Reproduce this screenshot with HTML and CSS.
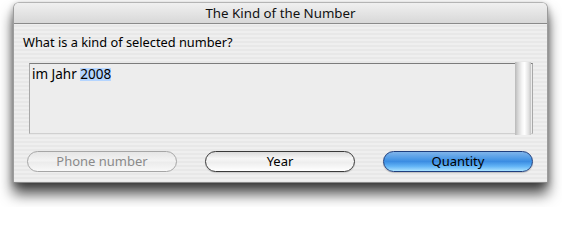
FILE: index.html
```html
<!DOCTYPE html>
<html>
<head>
<meta charset="utf-8">
<title>The Kind of the Number</title>
<link rel="stylesheet" href="styles.css">
</head>
<body>
<div class="window">
  <div class="titlebar">The Kind of the Number</div>
  <div class="content">
    <div class="prompt">What is a kind of selected number?</div>
    <div class="textbox">
      <div class="text">im Jahr <span class="sel">2008</span></div>
      <div class="scrollbar"></div>
    </div>
    <div class="buttons">
      <div class="btn disabled">Phone number</div>
      <div class="btn normal">Year</div>
      <div class="btn default">Quantity</div>
    </div>
  </div>
</div>
</body>
</html>
```
FILE: styles.css
```css
html, body {
  margin: 0;
  padding: 0;
  background: #ffffff;
}
body {
  font-family: "Noto Sans", "DejaVu Sans", sans-serif;
  color: #000;
  min-height: 207px;
  padding-top: 2px;
  box-sizing: border-box;
}
.window {
  margin: 0 0 0 13px;
  width: 533px;
  border: 1px solid #9c9c9c;
  border-top-color: #b4b4b4;
  border-bottom-color: #8a8a8a;
  border-radius: 6px 6px 0 0;
  background: repeating-linear-gradient(to bottom, #efefef 0px, #efefef 2px, #e8e8e8 2px, #e8e8e8 4px);
  box-shadow: 0 11px 14px rgba(0,0,0,0.7), 0 2px 6px rgba(0,0,0,0.3);
}
.titlebar {
  height: 20px;
  line-height: 20px;
  text-align: center;
  font-size: 13.3px;
  color: #111;
  background: linear-gradient(to bottom, #f0f0f0, #d8d8d8);
  border-bottom: 1px solid #8a8a8a;
  border-radius: 5px 5px 0 0;
}
.content {
  padding: 10px 14px 10px 9px;
}
.prompt {
  font-size: 12.8px;
  line-height: 16px;
  margin-bottom: 13px;
}
.textbox {
  display: flex;
  height: 69px;
  margin-left: 6px;
  border: 1px solid #a8a8a8;
  border-top-color: #7c7c7c;
  border-bottom-color: #d0d0d0;
  background: #ededed;
}
.text {
  flex: 1;
  font-size: 13.5px;
  line-height: 16px;
  padding: 2px 0 0 2px;
}
.sel {
  display: inline-block;
  line-height: 13px;
  height: 13px;
  background: #b5d5ff;
}
.scrollbar {
  width: 16px;
  margin: -2px 1px -2px 0;
  background: linear-gradient(to right, #b9b9b9 0%, #d8d8d8 20%, #f6f6f6 45%, #ffffff 60%, #e2e2e2 85%, #c4c4c4 100%);
}
.buttons {
  display: flex;
  justify-content: space-between;
  margin-top: 17px;
  padding-left: 4px;
}
.btn {
  width: 148px;
  height: 19px;
  line-height: 19px;
  border-radius: 11px;
  text-align: center;
  font-size: 13px;
}
.btn.disabled {
  border: 1px solid #a6a6a6;
  color: #8a8a8a;
  background: linear-gradient(to bottom, #e6e6e6 0%, #f3f3f3 45%, #ececec 55%, #f8f8f8 100%);
}
.btn.normal {
  border: 1px solid #3a3a3a;
  background: linear-gradient(to bottom, #dcdcdc 0%, #f7f7f7 35%, #eeeeee 55%, #ffffff 100%);
  box-shadow: 0 1px 1px rgba(0,0,0,0.15);
}
.btn.default {
  border: 1px solid #1f3f7e;
  background: linear-gradient(to bottom, #7fb4ea 0%, #4e9ae6 35%, #3b8de2 50%, #62b4f6 75%, #a8e2ff 100%);
  box-shadow: 0 1px 1px rgba(0,0,0,0.2);
}
```
